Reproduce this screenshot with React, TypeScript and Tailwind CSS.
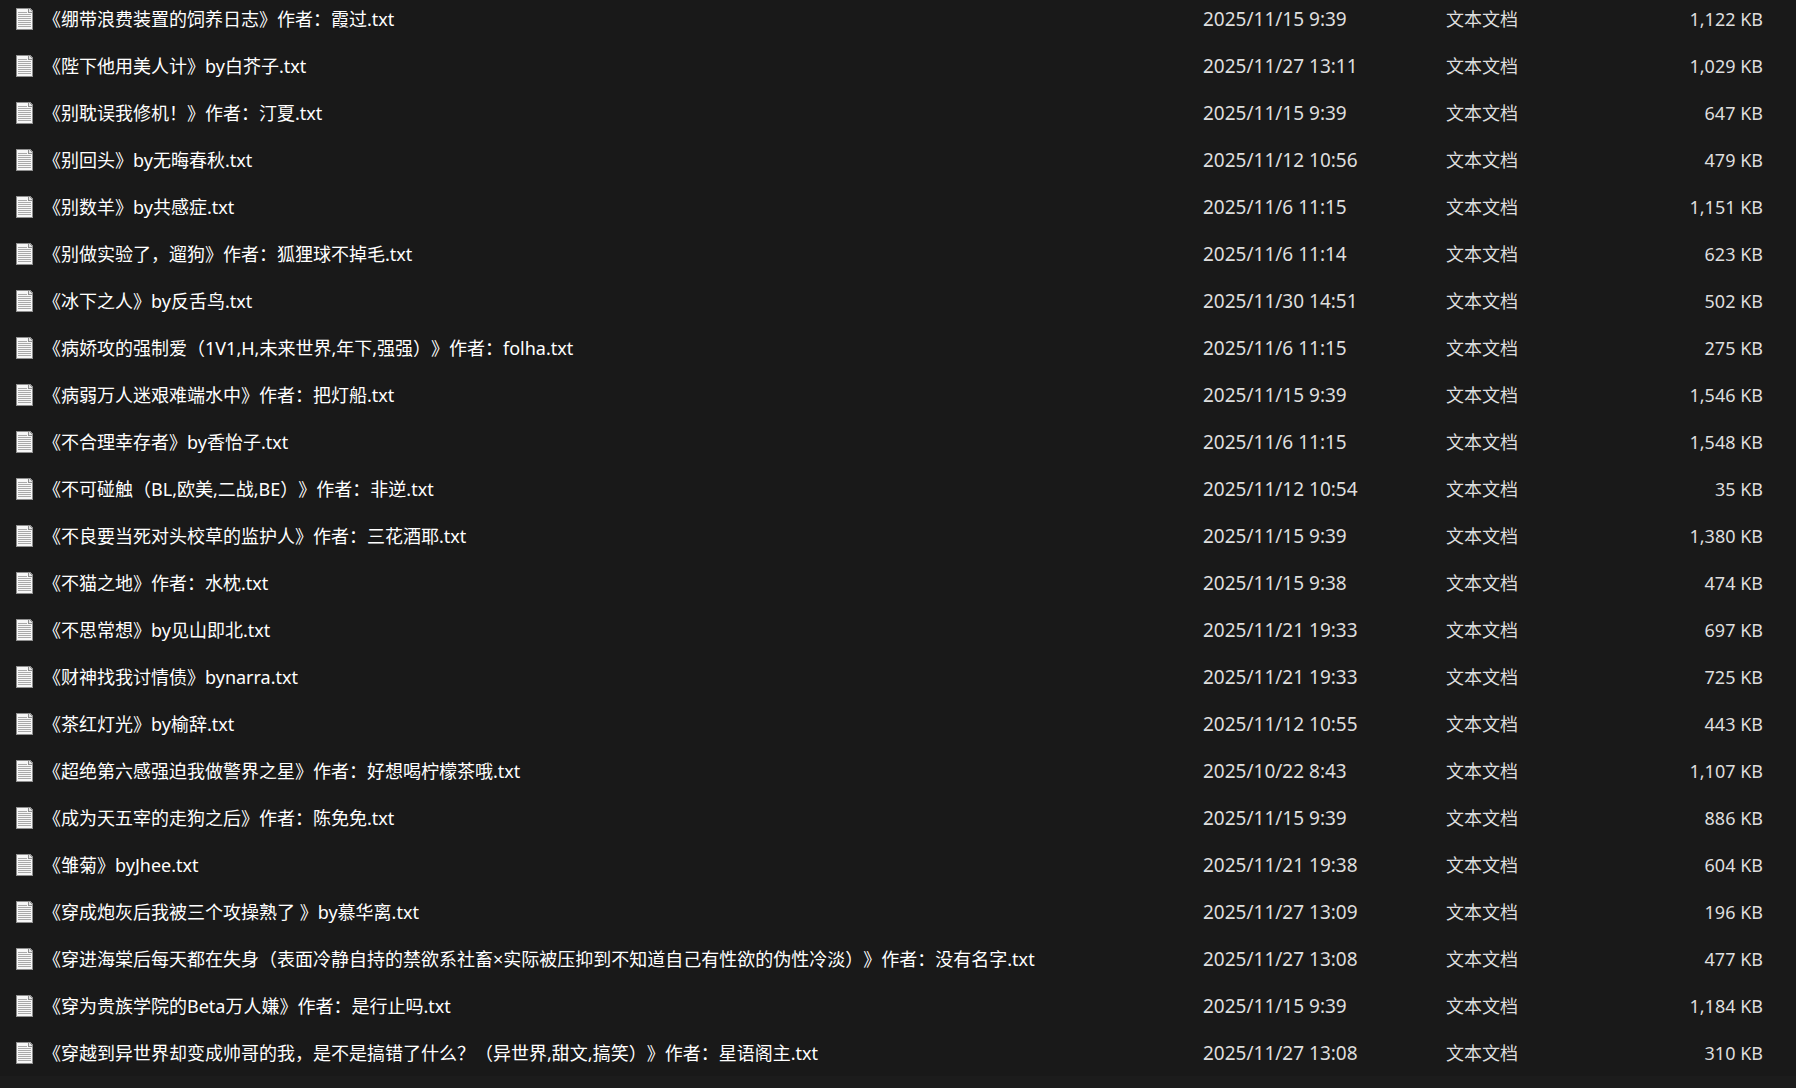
import React from 'react';

const files = [
  { name: '《绷带浪费装置的饲养日志》作者：霞过.txt', modified: '2025/11/15 9:39', size: '1,122 KB' },
  { name: '《陛下他用美人计》by白芥子.txt', modified: '2025/11/27 13:11', size: '1,029 KB' },
  { name: '《别耽误我修机！》作者：汀夏.txt', modified: '2025/11/15 9:39', size: '647 KB' },
  { name: '《别回头》by无晦春秋.txt', modified: '2025/11/12 10:56', size: '479 KB' },
  { name: '《别数羊》by共感症.txt', modified: '2025/11/6 11:15', size: '1,151 KB' },
  { name: '《别做实验了，遛狗》作者：狐狸球不掉毛.txt', modified: '2025/11/6 11:14', size: '623 KB' },
  { name: '《冰下之人》by反舌鸟.txt', modified: '2025/11/30 14:51', size: '502 KB' },
  { name: '《病娇攻的强制爱（1V1,H,未来世界,年下,强强）》作者：folha.txt', modified: '2025/11/6 11:15', size: '275 KB' },
  { name: '《病弱万人迷艰难端水中》作者：把灯船.txt', modified: '2025/11/15 9:39', size: '1,546 KB' },
  { name: '《不合理幸存者》by香怡子.txt', modified: '2025/11/6 11:15', size: '1,548 KB' },
  { name: '《不可碰触（BL,欧美,二战,BE）》作者：非逆.txt', modified: '2025/11/12 10:54', size: '35 KB' },
  { name: '《不良要当死对头校草的监护人》作者：三花酒耶.txt', modified: '2025/11/15 9:39', size: '1,380 KB' },
  { name: '《不猫之地》作者：水枕.txt', modified: '2025/11/15 9:38', size: '474 KB' },
  { name: '《不思常想》by见山即北.txt', modified: '2025/11/21 19:33', size: '697 KB' },
  { name: '《财神找我讨情债》bynarra.txt', modified: '2025/11/21 19:33', size: '725 KB' },
  { name: '《茶红灯光》by榆辞.txt', modified: '2025/11/12 10:55', size: '443 KB' },
  { name: '《超绝第六感强迫我做警界之星》作者：好想喝柠檬茶哦.txt', modified: '2025/10/22 8:43', size: '1,107 KB' },
  { name: '《成为天五宰的走狗之后》作者：陈免免.txt', modified: '2025/11/15 9:39', size: '886 KB' },
  { name: '《雏菊》byJhee.txt', modified: '2025/11/21 19:38', size: '604 KB' },
  { name: '《穿成炮灰后我被三个攻操熟了 》by慕华离.txt', modified: '2025/11/27 13:09', size: '196 KB' },
  { name: '《穿进海棠后每天都在失身（表面冷静自持的禁欲系社畜×实际被压抑到不知道自己有性欲的伪性冷淡）》作者：没有名字.txt', modified: '2025/11/27 13:08', size: '477 KB' },
  { name: '《穿为贵族学院的Beta万人嫌》作者：是行止吗.txt', modified: '2025/11/15 9:39', size: '1,184 KB' },
  { name: '《穿越到异世界却变成帅哥的我，是不是搞错了什么？（异世界,甜文,搞笑）》作者：星语阁主.txt', modified: '2025/11/27 13:08', size: '310 KB' }
];

function TextFileIcon() {
  return (
    <svg width="17" height="22" viewBox="0 0 17 22" className="shrink-0" shapeRendering="crispEdges" aria-hidden="true">
      <path d="M0 0H14L17 3V22H0Z" fill="#8f8f8f" />
      <path d="M1 1H12V5H16V21H1Z" fill="#f7f7f7" />
      <path d="M13 1V4H16Z" fill="#e4e4e4" />
      <path d="M2 4.5H11M2 6.5H15M2 8.5H15M2 10.5H15M2 12.5H15M2 14.5H15M2 16.5H15M2 18.5H15" stroke="#a9a9a9" />
    </svg>
  );
}

export default function App() {
  return (
    <main className="min-h-screen overflow-hidden bg-[#1c1c1c] font-['Noto_Sans','Noto_Sans_CJK_SC',sans-serif]">
      {/* The list is scrolled a few pixels past the top of the first row */}
      <table className="-mt-[5px] w-full table-fixed border-collapse bg-[#191919] text-[18px] leading-6 whitespace-nowrap text-[#dedede] [text-spacing-trim:space-all]">
        <colgroup>
          <col />
          <col className="w-[243px]" />
          <col className="w-[190px]" />
          <col className="w-[160px]" />
        </colgroup>
        <tbody>
          {files.map(file => (
            <tr key={file.name} className="h-[47px]">
              <td className="p-0 pl-4 text-white">
                <div className="flex items-center gap-[10px]">
                  <TextFileIcon />
                  <span>{file.name}</span>
                </div>
              </td>
              <td className="p-0 text-[19px]">{file.modified}</td>
              <td className="p-0">文本文档</td>
              <td className="p-0 pr-[33px] text-right">{file.size}</td>
            </tr>
          ))}
        </tbody>
      </table>
    </main>
  );
}
